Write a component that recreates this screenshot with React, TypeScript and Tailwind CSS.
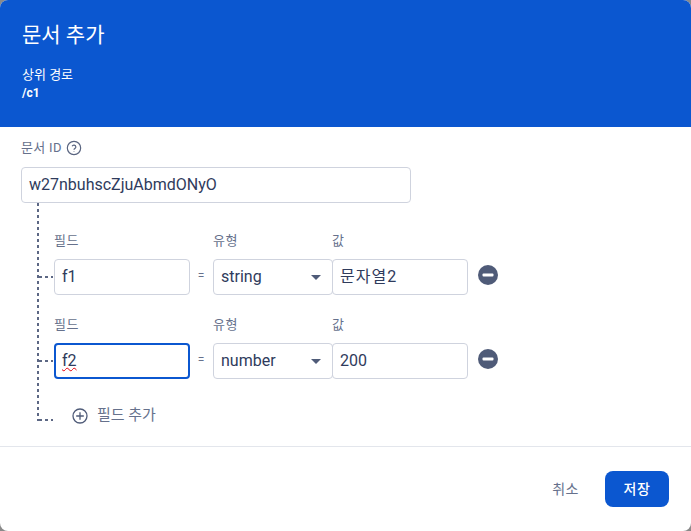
const FONT = "font-['Roboto','Noto_Sans_CJK_KR',sans-serif]"

const DOTS_H =
  'h-[2px] bg-[repeating-linear-gradient(to_right,#5c6784_0_3px,transparent_3px_6px)]'

type FieldRowProps = {
  name: string
  type: string
  value: string
  focused?: boolean
}

function FieldRow({ name, type, value, focused }: FieldRowProps) {
  return (
    <div className="flex h-[84px] items-start">
      <div className="mt-[28px] flex h-[36px] w-[15px] items-center">
        <div className={`w-[14px] ${DOTS_H}`} />
      </div>
      <div className="flex w-[136px] flex-col">
        <span className="h-[28px] pt-[2px] text-[13px] leading-4 tracking-[0.5px] text-[#66718c]">필드</span>
        {focused ? (
          <div className="flex h-[36px] items-center rounded-[4px] border-2 border-[#0b57d0] pl-[6px] text-base text-[#2f3b5c]">
            <span className="underline decoration-red-600 decoration-wavy decoration-1">{name}</span>
          </div>
        ) : (
          <div className="flex h-[36px] items-center rounded-[4px] border border-[#cfd3de] pl-[7px] text-base text-[#2f3b5c]">
            {name}
          </div>
        )}
      </div>
      <div className="mt-[27px] flex h-[36px] w-[23px] items-center justify-center pr-[1px] text-xs text-[#66718c]">=</div>
      <div className="flex w-[120px] flex-col">
        <span className="h-[28px] pt-[2px] text-[13px] leading-4 tracking-[0.5px] text-[#66718c]">유형</span>
        <div className="flex h-[36px] items-center justify-between rounded-[4px] border border-[#cfd3de] pl-[7px] pr-[11px] text-base text-[#2f3b5c]">
          {type}
          <svg width="10" height="5" viewBox="0 0 10 5" className="mt-[1px]">
            <path d="M0 0h10L5 5z" fill="#4f5b78" />
          </svg>
        </div>
      </div>
      <div className="-ml-px flex w-[136px] flex-col">
        <span className="h-[28px] pt-[2px] text-[13px] leading-4 text-[#66718c]">값</span>
        <div className="flex h-[36px] items-center rounded-[4px] border border-[#cfd3de] pl-[7px] text-base text-[#2f3b5c]">
          {value === '문자열2' ? <span className="tracking-[1px]">{value}</span> : value}
        </div>
      </div>
      <div className="mt-[26px] ml-[10px] flex h-[36px] items-center">
        <svg width="20" height="20" viewBox="0 0 20 20">
          <circle cx="10" cy="10" r="10" fill="#4f5b78" />
          <rect x="4.5" y="8.5" width="11" height="3" rx="1" fill="#fff" />
        </svg>
      </div>
    </div>
  )
}

export default function App() {
  return (
    <div className={`h-[531px] w-[691px] overflow-hidden bg-[#8a8a8a] ${FONT}`}>
      <div className="flex h-full flex-col overflow-hidden rounded-[8px] bg-white">
        <header className="h-[127px] bg-[#0b57d0] pl-[22px] pt-[21px] text-white">
          <h1 className="text-[21px] leading-7 font-normal">문서 추가</h1>
          <p className="mt-[18px] text-[13px] leading-4">상위 경로</p>
          <p className="mt-[2px] text-xs leading-4 font-bold">/c1</p>
        </header>

        <section className="h-[319px] pl-[21px]">
          <div className="flex h-[40px] items-end gap-[4px] pb-[11px] text-[13px] text-[#66718c]">
            <span className="leading-4 tracking-[0.3px]">문서 ID</span>
            <svg width="16" height="16" viewBox="0 0 24 24" fill="none" stroke="#5a6580" strokeWidth="1.8">
              <circle cx="12" cy="12" r="10" />
              <path d="M9.2 9.5a2.9 2.9 0 0 1 5.6 1c0 1.9-2.8 2.3-2.8 4" />
              <path d="M12 17.4v.6" />
            </svg>
          </div>
          <div className="flex h-[36px] w-[390px] items-center rounded-[4px] border border-[#cfd3de] pl-[7px] text-base text-[#2f3b5c]">
            w27nbuhscZjuAbmdONyO
          </div>
          <div className="ml-[16px] h-[218px] bg-[repeating-linear-gradient(to_bottom,#5c6784_0_3px,transparent_3px_6px)] bg-[length:2px_100%] bg-no-repeat pl-[2px]">
            <div className="pt-[28px]">
              <FieldRow name="f1" type="string" value="문자열2" />
              <FieldRow name="f2" type="number" value="200" focused />
            </div>
            <div className="flex h-[22px] items-start">
              <div className={`mt-[20px] w-[14px] ${DOTS_H}`} />
              <svg width="16" height="16" viewBox="0 0 16 16" fill="none" stroke="#4f5b78" strokeWidth="1.3" className="mt-[9px] ml-[19px]">
                <circle cx="8" cy="8" r="7" />
                <path d="M8 4.2v7.6M4.2 8h7.6" />
              </svg>
              <span className="mt-[6px] ml-[9px] text-[15px] leading-5 text-[#66718c]">필드 추가</span>
            </div>
          </div>
        </section>

        <footer className="flex flex-1 items-center justify-end border-t border-[#e3e6ec] pr-[22px]">
          <button type="button" className="mr-[26px] text-[14px] tracking-[0.5px] text-[#66718c]">취소</button>
          <button type="button" className="h-[36px] w-[64px] rounded-[8px] bg-[#0b57d0] text-[14px] tracking-[0.5px] font-medium text-white">저장</button>
        </footer>
      </div>
    </div>
  )
}
